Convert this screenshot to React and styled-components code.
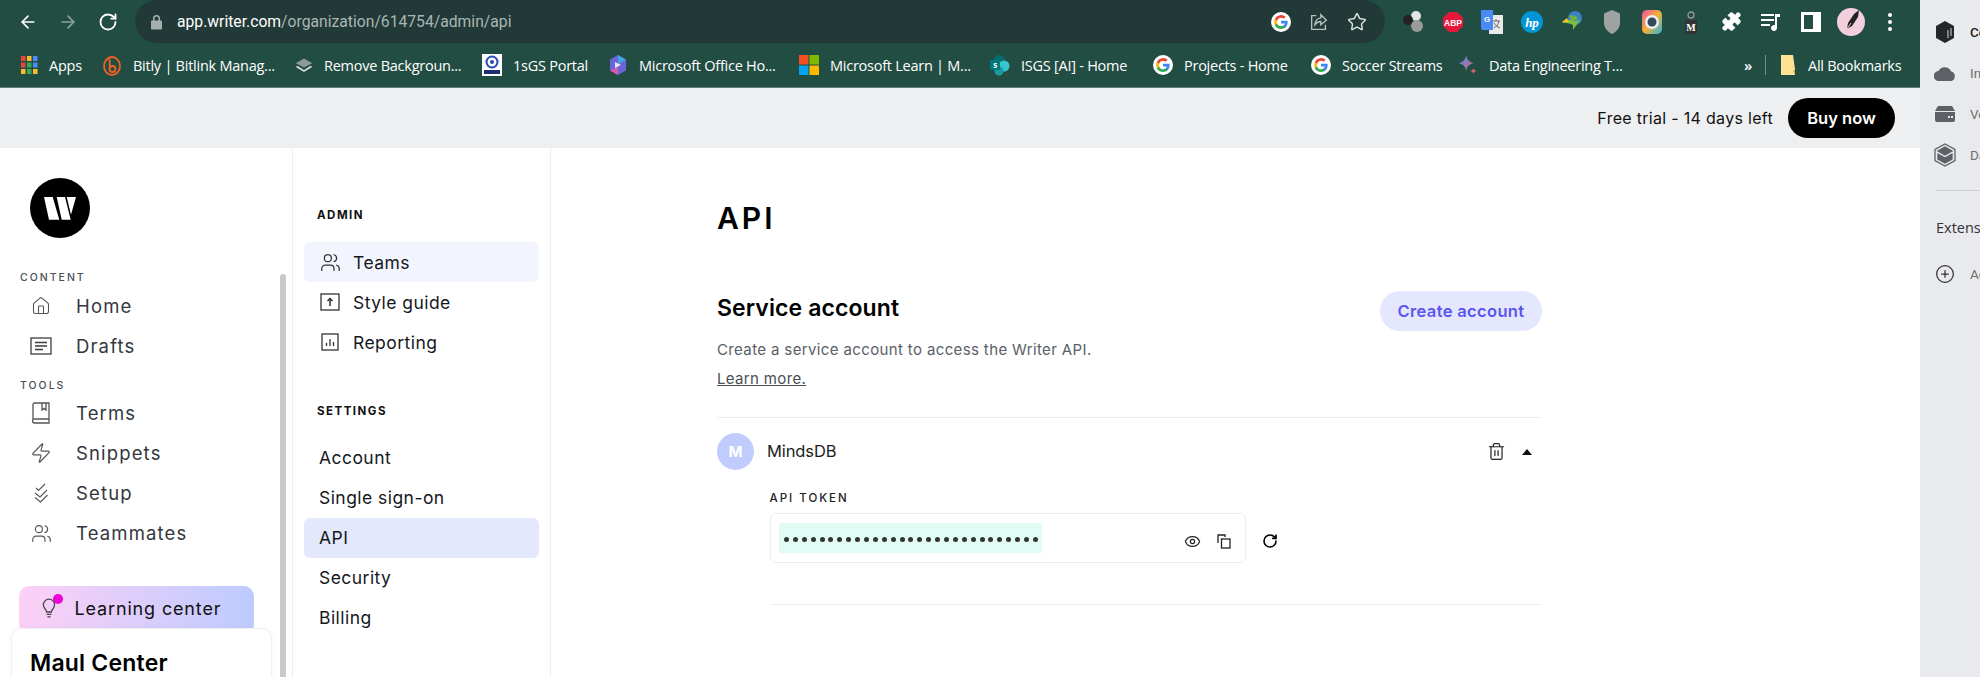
import React from "react";
import styled, { createGlobalStyle } from "styled-components";
import { ArrowLeft, ArrowRight, RotateCw, Star, Puzzle, Eye, Trash2, Home as HomeIcon, Zap, Users, CirclePlus } from "lucide-react";

const Global = createGlobalStyle`
  html, body { margin: 0; padding: 0; background: #fff; }
  body { width: 1980px; height: 677px; overflow: hidden; font-family: "Inter", "Liberation Sans", sans-serif; }
  * { box-sizing: border-box; }
`;
const Shell = styled.div`display: flex; width: 1980px; height: 677px; overflow: hidden;`;
const Window = styled.div`width: 1920px; display: flex; flex-direction: column; flex: none;`;
const Toolbar = styled.div`height: 43px; background: #224d43; display: flex; align-items: center; padding-left: 17px; position: relative;`;
const NavButton = styled.div`width: 40px; height: 43px; display: flex; align-items: center; justify-content: flex-start; padding-left: 1px; color: ${p => p.$dim ? "#8aa39c" : "#fff"};`;
const Omnibox = styled.div`width: 1250px; height: 43px; margin-left: -2px; border-radius: 22px; background: #223a37; display: flex; align-items: center; padding-left: 15px; padding-right: 9px;`;
const Url = styled.div`font: 400 15.7px "Roboto", sans-serif; color: #a9b6b3; margin-left: 14px; flex: 1;`;
const UrlHost = styled.span`color: #fff;`;
const OmniIcon = styled.div`width: 38px; display: flex; justify-content: center; align-items: center; color: #dfe6e4;`;
const ExtRow = styled.div`display: flex; margin-left: 8px; align-items: center;`;
const Ext = styled.div`width: 39.8px; height: 41px; display: flex; align-items: center; justify-content: center; color: #fff;`;
const BookmarkBar = styled.div`height: 45px; background: #224d43; border-bottom: 1px solid #5d7d75; display: flex; align-items: center; padding-left: 20px; position: relative;`;
const Bookmark = styled.div`width: ${p => p.$w}px; flex: none; display: flex; align-items: center; gap: ${p => p.$gap ?? 11}px; font: 400 14.5px "Open Sans", sans-serif; color: #fff; white-space: nowrap; letter-spacing: -.25px;`;
const BmIcon = styled.div`width: ${p => p.$s || 20}px; height: 20px; display: flex; align-items: center; justify-content: center; flex: none;`;
const More = styled.div`font: 600 15px "Open Sans", sans-serif; color: #fff; width: 18px; margin-left: 97px; margin-right: 3px;`;
const Sep = styled.div`width: 1px; height: 20px; background: #6f8e86; margin-right: 14px;`;
const TrialBar = styled.div`height: 60px; background: #eeeff1; display: flex; align-items: center; justify-content: flex-end; padding-right: 25px; gap: 15px;`;
const TrialText = styled.div`font-size: 16px; color: #111; letter-spacing: .3px;`;
const BuyNow = styled.div`width: 107px; height: 40px; border-radius: 20px; background: #000; color: #fff; font-weight: 600; font-size: 16.5px; display: flex; align-items: center; justify-content: center;`;
const Body = styled.div`flex: 1; display: flex; min-height: 0; background: #fff;`;
const Sidebar = styled.div`width: 293px; flex: none; border-right: 1px solid #eceef1; position: relative; overflow: hidden; padding-top: 30px;`;
const Logo = styled.div`width: 60px; height: 60px; border-radius: 50%; background: #000; margin-left: 30px; margin-bottom: 30px; display: flex; align-items: center; justify-content: center;`;
const NavLabel = styled.div`font-size: 10.5px; font-weight: 500; letter-spacing: 2px; color: #4a4f57; height: 18px; line-height: 19px; margin-left: 20px; margin-top: ${p => p.$mt || 0}px; margin-bottom: ${p => p.$mb || 0}px;`;
const NavRow = styled.div`height: ${p => p.$h || 40}px; display: flex; align-items: center; font-size: 18.5px; letter-spacing: 1.15px; color: #33373d; padding-left: 28px;`;
const NavIcon = styled.div`width: 26px; margin-right: 22px; display: flex; justify-content: center; color: #555;`;
const Learning = styled.div`width: 235px; height: 48px; margin: 33px 0 0 19px; border-radius: 10px; background: linear-gradient(90deg, #fdd0f6, #bdcbff); display: flex; align-items: center; padding: 0 0 4px 22px; font-size: 18px; letter-spacing: .85px; color: #111; gap: 17.5px;`;
const BulbWrap = styled.div`position: relative; width: 16px; height: 20px; display: flex; justify-content: center; color: #444;`;
const BulbDot = styled.div`position: absolute; width: 10px; height: 10px; border-radius: 50%; background: #f000d8; top: -4px; right: -6px;`;
const MaulCard = styled.div`position: absolute; left: 11px; top: 480px; width: 261px; height: 80px; border: 1px solid #eef0f3; border-radius: 10px; background: #fff; padding: 20px 18px; font-size: 23px; font-weight: 600; color: #000; letter-spacing: .2px; box-shadow: 0 0 8px rgba(0,0,0,.03);`;
const Scroll = styled.div`position: absolute; left: 280px; top: 126px; bottom: 0; width: 6px; border-radius: 3px 3px 0 0; background: #c9c9c9;`;
const SubNav = styled.div`width: 258px; flex: none; border-right: 1px solid #eceef1; padding: 55px 11px 0 11px;`;
const SubLabel = styled.div`font-size: 11.5px; font-weight: 700; letter-spacing: 1.5px; color: #111; height: 20px; line-height: 25px; margin-left: 13px; margin-top: ${p => p.$mt || 0}px; margin-bottom: ${p => p.$mb || 0}px;`;
const SubRow = styled.div`height: 40px; width: 235px; border-radius: 6px; display: flex; align-items: center; font-size: 17.5px; letter-spacing: .45px; color: #15181d; padding-left: ${p => p.$pl || 15}px; background: ${p => p.$bg || "transparent"};`;
const SubIcon = styled.div`width: 22px; margin-right: 12px; display: flex; justify-content: center; color: #333;`;
const Main = styled.div`flex: 1; padding: 49.5px 0 0 166px;`;
const Content = styled.div`width: 825px;`;
const Title = styled.h1`margin: 0; font-size: 30px; line-height: 40px; font-weight: 600; letter-spacing: 3px; color: #000;`;
const ServiceHead = styled.div`margin-top: 53.5px; height: 40px; display: flex; justify-content: space-between;`;
const Heading = styled.h2`margin: 0; font-size: 23px; line-height: 34.5px; font-weight: 600; color: #000; letter-spacing: .1px;`;
const CreateBtn = styled.div`width: 162px; height: 40px; border-radius: 20px; background: #e4e7fe; color: #5b55ee; font-weight: 600; font-size: 16.5px; letter-spacing: .35px; display: flex; align-items: center; justify-content: center;`;
const Desc = styled.p`margin: 8px 0 0; font-size: 15px; line-height: 22px; color: #5a5e66; letter-spacing: .37px;`;
const LearnMore = styled.a`display: block; margin-top: 7px; font-size: 15px; line-height: 22px; color: #4a4e55; text-decoration: underline; letter-spacing: .35px;`;
const Rule = styled.div`height: 1px; background: #eceef1; margin-top: ${p => p.$mt}px; margin-left: ${p => p.$ml || 0}px;`;
const AccountRow = styled.div`margin-top: 15px; height: 37px; display: flex; align-items: center; color: #222;`;
const Avatar = styled.div`width: 37px; height: 37px; border-radius: 50%; background: #c1ccfe; color: #fff; font-weight: 700; font-size: 15px; display: flex; align-items: center; justify-content: center; margin-right: 13px;`;
const AccountName = styled.div`flex: 1; font-size: 16.5px; color: #1a1d22; letter-spacing: -.1px; padding-bottom: 2px;`;
const Caret = styled.div`width: 0; height: 0; border-left: 5px solid transparent; border-right: 5px solid transparent; border-bottom: 6px solid #111; margin: 0 10px 0 16px;`;
const TokenLabel = styled.div`margin: 20px 0 0 52.5px; font-size: 11.5px; line-height: 16px; font-weight: 500; letter-spacing: 2px; color: #222;`;
const TokenRow = styled.div`margin: 7px 0 0 53px; display: flex; align-items: center; gap: 16px;`;
const TokenField = styled.div`width: 476px; height: 50px; border: 1px solid #eceef1; border-radius: 6px; display: flex; align-items: center; padding-left: 8px; padding-right: 14px;`;
const TokenMask = styled.div`width: 263px; height: 30px; background: #e1fbf5; display: flex; align-items: center; gap: 3.9px; padding: 3px 0 0 5px; margin-right: auto;`;
const Dot = styled.span`width: 5px; height: 5px; border-radius: 50%; background: #333; flex: none;`;
const TokenIcon = styled.div`display: flex; margin-left: 16px; padding-top: 6px; color: #222;`;
const Refresh = styled(RotateCw)`margin-top: 5px;`;
const SidePanel = styled.div`width: 60px; flex: none; background: #e9eaed; padding: 11px 0 0 14px; display: flex; flex-direction: column; overflow: hidden;`;
const SideItem = styled.div`height: 41px; width: 200px; flex: none; display: flex; align-items: center; gap: 14px; font: 400 13.5px "Roboto", sans-serif; color: ${p => p.$dark ? "#1b1d20" : "#6c6f73"}; white-space: nowrap; font-weight: ${p => p.$dark ? 500 : 400}; & > svg { flex: none; }`;
const SideRule = styled.div`height: 1px; width: 100px; flex: none; background: #cfd1d4; margin: 15px 0 26px 2px;`;
const SideText = styled.div`font: 400 14.5px "Open Sans", sans-serif; color: #333; white-space: nowrap; height: 22px; line-height: 22px; margin: 0 0 14px 2px;`;
const PlusSlot = styled.div`width: 22px; display: flex; justify-content: center; color: #333; flex: none;`;

const Google = ({ s = 20 }) => (
  <svg width={s} height={s} viewBox="0 0 24 24">
    <circle cx="12" cy="12" r="12" fill="#fff" />
    <path d="M20 12.2c0-.6 0-1.1-.1-1.6H12v3.1h4.5a3.9 3.9 0 0 1-1.7 2.5v2h2.7c1.6-1.4 2.5-3.5 2.5-6z" fill="#4285F4" />
    <path d="M12 20.3c2.2 0 4.1-.7 5.5-2l-2.7-2c-.7.5-1.7.8-2.8.8-2.2 0-4-1.4-4.6-3.4H4.6v2.1A8.3 8.3 0 0 0 12 20.3z" fill="#34A853" />
    <path d="M7.4 13.7a5 5 0 0 1 0-3.2V8.400H4.600a8.300 8.300 0 0 0 0 7.400z" fill="#FBBC05" />
    <path d="M12 7c1.200 0 2.300.4 3.200 1.200l2.400-2.400A8.300 8.300 0 0 0 4.600 8.400l2.800 2.100C8 8.500 9.800 7 12 7z" fill="#EA4335" />
  </svg>
);
const AppsGrid = () => {
  const c = ["#e8453c", "#f9bb2d", "#4a8af4", "#e8453c", "#3aa757", "#4a8af4", "#f9bb2d", "#3aa757", "#f9bb2d"];
  return <svg width="18" height="20" viewBox="0 0 18 20">{c.map((f, i) => <rect key={i} x={1 + (i % 3) * 6} y={1 + Math.floor(i / 3) * 6.5} width="4.500" height="5" fill={f} />)}</svg>;
};
const BitlyIcon = () => (
  <svg width="20" height="22" viewBox="0 0 20 22" fill="none" stroke="#ee6123" strokeWidth="1.800">
    <ellipse cx="10" cy="12" rx="8" ry="9" /><circle cx="10.500" cy="15" r="3" /><path d="M7.500 4.500l.4 10" />
  </svg>
);
const LayersIcon = () => (
  <svg width="22" height="18" viewBox="0 0 22 18"><path d="M11 1l10 6-10 5L1 7z" fill="#8f9a97" /><path d="M3 10l8 5 8-5 2 1.500-10 6-10-6z" fill="#d5dad8" /></svg>
);
const IsgsIcon = () => (
  <svg width="20" height="22" viewBox="0 0 20 22"><rect width="20" height="22" fill="#fff" /><circle cx="10" cy="8" r="5.500" fill="none" stroke="#2649b5" strokeWidth="2" /><circle cx="10" cy="8" r="2" fill="#2649b5" /><rect x="2" y="16" width="16" height="4" fill="#20306f" /></svg>
);
const OfficeIcon = () => (
  <svg width="20" height="22" viewBox="0 0 20 22"><path d="M10 1l8 4.500v11L10 21l-8-4.500v-11z" fill="#6b64d8" /><path d="M10 1l8 4.500-8 5z" fill="#3fa6e0" /><path d="M2 16.500L10 21V13z" fill="#d65db1" /><path d="M7 8l6 3-6 3z" fill="#e6e6fa" /></svg>
);
const MsIcon = () => (
  <svg width="20" height="20" viewBox="0 0 20 20"><rect width="9.500" height="9.500" fill="#f25022" /><rect x="10.500" width="9.500" height="9.500" fill="#7fba00" /><rect y="10.500" width="9.500" height="9.500" fill="#00a4ef" /><rect x="10.500" y="10.500" width="9.500" height="9.500" fill="#ffb900" /></svg>
);
const SpIcon = () => (
  <svg width="20" height="22" viewBox="0 0 20 22"><circle cx="9" cy="7" r="6" fill="#036c70" /><circle cx="14" cy="12" r="5.500" fill="#37c6d0" /><circle cx="9" cy="17" r="4.500" fill="#1a9ba1" /><rect x="0" y="6" width="10" height="10" rx="1" fill="#03787c" /><text x="5" y="14" fontSize="8" fontWeight="700" fill="#fff" textAnchor="middle" fontFamily="Open Sans">s</text></svg>
);
const GemIcon = () => (
  <svg width="22" height="24" viewBox="0 0 22 24"><defs><linearGradient id="gem" x1="0" y1="0" x2="1" y2="1"><stop offset="0" stopColor="#4a8af4" /><stop offset="1" stopColor="#d96570" /></linearGradient></defs><path d="M9 1c.8 5 2.500 7 8 9-5.500 1.500-7.200 3.500-8 9-.8-5.500-2.500-7.500-8-9 5.500-2 7.200-4 8-9z" fill="url(#gem)" /><path d="M17 15c.3 2 1 2.800 3.500 3.500-2.500.7-3.200 1.500-3.500 3.500-.3-2-1-2.800-3.500-3.500 2.500-.7 3.200-1.500 3.500-3.500z" fill="#d96570" /></svg>
);
const FolderIcon = () => (
  <svg width="16" height="22" viewBox="0 0 16 22"><path d="M1 1h12l2 14v6H1z" fill="#fde293" /><path d="M13 16h2v5z" fill="#c9a94e" /></svg>
);
const ShareIcon = () => (
  <svg width="22" height="22" viewBox="0 0 24 24" fill="none" stroke="#b5c0bd" strokeWidth="1.500"><path d="M9 5H4v15h15v-5" /><path d="M20 10l-6-6v3.500c-4 .5-6 3-6.500 7.500 2-2.500 3.500-3.500 6.500-3.500V15z" /></svg>
);
const Balls = () => (
  <svg width="22" height="24" viewBox="0 0 22 24"><circle cx="14" cy="6" r="5" fill="#e4e4e4" /><circle cx="6" cy="10" r="5" fill="#222" /><circle cx="15" cy="16" r="6" fill="#9a9a9a" /></svg>
);
const Abp = () => (
  <svg width="22" height="22" viewBox="0 0 22 22"><path d="M7 1h8l6 6v8l-6 6H7l-6-6V7z" fill="#e8173a" /><text x="11" y="14.500" fontSize="8.500" fontWeight="700" fill="#fff" textAnchor="middle" fontFamily="Liberation Sans">ABP</text></svg>
);
const Translate = () => (
  <svg width="22" height="24" viewBox="0 0 22 24"><rect x="8" y="5" width="14" height="19" fill="#e9e9e9" /><path d="M12 11h7M15 9v2M18 11c-1 4-3 6-5 7M13 13c1 2 3 4 6 5" stroke="#666" strokeWidth="1" fill="none" /><path d="M0 0h12v20H2a2 2 0 0 1-2-2z" fill="#4a8af4" /><text x="6" y="12" fontSize="8" fontWeight="700" fill="#fff" textAnchor="middle" fontFamily="Liberation Sans">G</text></svg>
);
const Hp = () => (
  <svg width="22" height="22" viewBox="0 0 22 22"><circle cx="11" cy="11" r="11" fill="#0096d6" /><text x="11" y="15.500" fontSize="13" fontStyle="italic" fontWeight="700" fill="#fff" textAnchor="middle" fontFamily="Liberation Serif">hp</text></svg>
);
const Idm = () => (
  <svg width="22" height="24" viewBox="0 0 22 24"><circle cx="14" cy="8" r="7" fill="#3e7fc4" /><path d="M8 6c3-2 8 0 9 3l-6 2z" fill="#6cb33f" /><path d="M1 13c4-4 8-4 12-2l6-1-7 10v-5c-4-2-7-2-11-2z" fill="#7abf43" /><path d="M1 12l5-4 2 4z" fill="#f2c230" /></svg>
);
const Shield = () => (
  <svg width="18" height="24" viewBox="0 0 18 24"><path d="M9 0l8 3.500V13c0 5-4 9-8 11-4-2-8-6-8-11V3.500z" fill="#9ea3a2" /></svg>
);
const Lens = () => (
  <svg width="20" height="24" viewBox="0 0 20 24"><defs><linearGradient id="lens" x1="0" y1="0" x2="1" y2="1"><stop offset="0" stopColor="#f04fa3" /><stop offset=".5" stopColor="#f8b133" /><stop offset="1" stopColor="#20b6e8" /></linearGradient></defs><rect width="20" height="24" rx="5" fill="url(#lens)" /><circle cx="10" cy="12" r="7" fill="#eaf1f2" /><circle cx="10" cy="12" r="4.500" fill="#334b5c" /></svg>
);
const Mext = () => (
  <svg width="16" height="24" viewBox="0 0 16 24"><rect x="2" y="10" width="12" height="14" fill="#333" /><circle cx="8" cy="5" r="3" fill="none" stroke="#999" strokeWidth="1.300" /><text x="8" y="21" fontSize="10" fontWeight="700" fill="#fff" textAnchor="middle" fontFamily="Liberation Serif">M</text></svg>
);
const QueueMusic = () => (
  <svg width="22" height="22" viewBox="0 0 22 22" fill="#fff"><rect x="1" y="3" width="13" height="2" /><rect x="1" y="8" width="13" height="2" /><rect x="1" y="13" width="9" height="2" /><path d="M15 3h5v3h-3v11a3 3 0 1 1-2-2.800z" /></svg>
);
const PanelIcon = () => (
  <svg width="20" height="20" viewBox="0 0 20 20"><rect x="1.500" y="1.500" width="17" height="17" fill="none" stroke="#fff" strokeWidth="3" /><rect x="12" y="2" width="6" height="16" fill="#fff" /></svg>
);
const Profile = () => (
  <svg width="28" height="28" viewBox="0 0 28 28"><circle cx="14" cy="14" r="14" fill="#f2cfdd" /><path d="M22 2l-5 4-6 9-1 6 5-3 6-9z" fill="#222" /><path d="M10 21l4-6" stroke="#f2cfdd" /></svg>
);
const Dots = () => (
  <svg width="6" height="20" viewBox="0 0 6 20" fill="#fff"><circle cx="3" cy="3" r="2" /><circle cx="3" cy="10" r="2" /><circle cx="3" cy="17" r="2" /></svg>
);
const LockIcon = () => (
  <svg width="13" height="16" viewBox="0 0 13 16" fill="#a5b0ad"><path d="M3 7V4.500a3.500 3.500 0 0 1 7 0V7h-1.500V4.500a2 2 0 0 0-4 0V7z" /><rect x="1" y="6.500" width="11" height="9" rx="1" /></svg>
);
const WLogo = () => (
  <svg width="32" height="23" viewBox="0 0 32 23" fill="#fff"><path d="M0 0h8.700l6.600 22.700H5z" /><path d="M12.700 0H21l5.700 22.700h-9z" /><path d="M22.700 0H32l-5 17.700z" /></svg>
);
const DraftsIcon = () => (
  <svg width="22" height="18" viewBox="0 0 22 18" fill="none" stroke="#3d3d3d" strokeWidth="1.300"><rect x="1" y="1" width="20" height="16" /><path d="M5 5.500h12M5 9h12M5 12.500h8" /></svg>
);
const BookIcon = () => (
  <svg width="20" height="22" viewBox="0 0 20 22" fill="none" stroke="#555" strokeWidth="1.300"><path d="M2 18V2.500A1.500 1.500 0 0 1 3.500 1H18v16H3.500a1.700 1.700 0 0 0 0 4H18v-4" /><path d="M11 1v7l2.200-1.600L15 8V1" /></svg>
);
const SetupIcon = () => (
  <svg width="16" height="20" viewBox="0 0 16 20" fill="none" stroke="#555" strokeWidth="1.100"><path d="M3 5l2.500 2.500L12 1M2 10l5 4 7-7M2 14.500l5.500 4.500 7-7" /></svg>
);
const BulbIcon = () => (
  <svg width="16" height="20" viewBox="0 0 20 24" fill="none" stroke="#444" strokeWidth="1.600"><path d="M7 17c0-3-4-4.500-4-9a7 7 0 0 1 14 0c0 4.500-4 6-4 9z" /><path d="M7 20h6M8 23h4" /></svg>
);
const UploadBox = () => (
  <svg width="20" height="18" viewBox="0 0 20 18" fill="none" stroke="#333" strokeWidth="1.300"><rect x="1" y="1" width="18" height="16" /><path d="M10 13V6M7.500 8L10 5.500 12.500 8" strokeWidth="1.500" /></svg>
);
const ChartBox = () => (
  <svg width="18" height="18" viewBox="0 0 18 18" fill="none" stroke="#333" strokeWidth="1.300"><rect x="1" y="1" width="16" height="16" /><path d="M5.500 13v-3M9 13V6M12.500 13V9" /></svg>
);
const CopyIcon = () => (
  <svg width="14" height="15" viewBox="0 0 14 15" fill="none" stroke="#222" strokeWidth="1.300"><rect x="4.500" y="5" width="8.500" height="9" /><path d="M1 9V1h7v2" /></svg>
);
const Cube = () => (
  <svg width="22" height="24" viewBox="0 0 22 24"><path d="M11 1l9 5v12l-9 5-9-5V6z" fill="#24272a" /><path d="M14 10v8M17 8v8" stroke="#9a9da0" strokeWidth="1.500" /></svg>
);
const Cloud = () => (
  <svg width="22" height="16" viewBox="0 0 22 16" fill="#5d6166"><path d="M5 16a5 5 0 0 1-.6-10A7 7 0 0 1 17 6.300 5 5 0 0 1 17 16z" /></svg>
);
const Drive = () => (
  <svg width="22" height="16" viewBox="0 0 22 16" fill="#5d6166"><path d="M4 0h14l3 5H1z" /><path d="M1 6h20v8a2 2 0 0 1-2 2H3a2 2 0 0 1-2-2z" /><rect x="14" y="10" width="2" height="2" fill="#e9eaed" /><rect x="17" y="10" width="2" height="2" fill="#e9eaed" /></svg>
);
const Box3d = () => (
  <svg width="22" height="24" viewBox="0 0 22 24" fill="none" stroke="#5d6166" strokeWidth="1.300"><path d="M11 1l10 5.500v11L11 23 1 17.500v-11z" /><path d="M11 4l7 4-7 4-7-4z" fill="#5d6166" /><path d="M4 11l7 4 7-4v5l-7 4-7-4z" fill="#5d6166" /></svg>
);

const bookmarks = [
  ["Apps", <AppsGrid />, 82, 18],
  ["Bitly | Bitlink Manag...", <BitlyIcon />, 193, 20],
  ["Remove Backgroun...", <LayersIcon />, 187, 18],
  ["1sGS Portal", <IsgsIcon />, 126, 20],
  ["Microsoft Office Ho...", <OfficeIcon />, 191, 20],
  ["Microsoft Learn | M...", <MsIcon />, 191, 20],
  ["ISGS [AI] - Home", <SpIcon />, 163, 20],
  ["Projects - Home", <Google />, 158, 20],
  ["Soccer Streams", <Google />, 147, 20],
  ["Data Engineering T...", <GemIcon />, 189, 20],
];
const extensions = [<Balls />, <Abp />, <Translate />, <Hp />, <Idm />, <Shield />, <Lens />, <Mext />, <Puzzle size={21} fill="#fff" strokeWidth={1} />, <QueueMusic />, <PanelIcon />, <Profile />, <Dots />];

export default function App() {
  return (
    <Shell>
      <Global />
      <Window>
        <Toolbar>
          <NavButton><ArrowLeft size={20} strokeWidth={2} /></NavButton>
          <NavButton $dim><ArrowRight size={20} strokeWidth={2} /></NavButton>
          <NavButton><RotateCw size={20} strokeWidth={2.200} /></NavButton>
          <Omnibox>
            <LockIcon />
            <Url><UrlHost>app.writer.com</UrlHost>/organization/614754/admin/api</Url>
            <OmniIcon><Google s={20} /></OmniIcon>
            <OmniIcon><ShareIcon /></OmniIcon>
            <OmniIcon><Star size={20} strokeWidth={1.700} /></OmniIcon>
          </Omnibox>
          <ExtRow>{extensions.map((e, i) => <Ext key={i}>{e}</Ext>)}</ExtRow>
        </Toolbar>
        <BookmarkBar>
          {bookmarks.map(([t, ic, w, s]) => (
            <Bookmark key={t} $w={w}><BmIcon $s={s}>{ic}</BmIcon>{t}</Bookmark>
          ))}
          <More>»</More>
          <Sep />
          <Bookmark $w={115} $gap={12}><BmIcon $s={16}><FolderIcon /></BmIcon>All Bookmarks</Bookmark>
        </BookmarkBar>
        <TrialBar>
          <TrialText>Free trial - 14 days left</TrialText>
          <BuyNow>Buy now</BuyNow>
        </TrialBar>
        <Body>
          <Sidebar>
            <Logo><WLogo /></Logo>
            <NavLabel>CONTENT</NavLabel>
            <NavRow><NavIcon><HomeIcon size={20} strokeWidth={1.300} /></NavIcon>Home</NavRow>
            <NavRow><NavIcon><DraftsIcon /></NavIcon>Drafts</NavRow>
            <NavLabel $mt={10} $mb={-2}>TOOLS</NavLabel>
            <NavRow $h={41}><NavIcon><BookIcon /></NavIcon>Terms</NavRow>
            <NavRow><NavIcon><Zap size={22} strokeWidth={1.300} /></NavIcon>Snippets</NavRow>
            <NavRow><NavIcon><SetupIcon /></NavIcon>Setup</NavRow>
            <NavRow><NavIcon><Users size={21} strokeWidth={1.300} /></NavIcon>Teammates</NavRow>
            <Learning>
              <BulbWrap><BulbIcon /><BulbDot /></BulbWrap>
              Learning center
            </Learning>
            <MaulCard>Maul Center</MaulCard>
            <Scroll />
          </Sidebar>
          <SubNav>
            <SubLabel $mb={19}>ADMIN</SubLabel>
            <SubRow $bg="#f2f5fe"><SubIcon><Users size={21} strokeWidth={1.400} /></SubIcon>Teams</SubRow>
            <SubRow><SubIcon><UploadBox /></SubIcon>Style guide</SubRow>
            <SubRow><SubIcon><ChartBox /></SubIcon>Reporting</SubRow>
            <SubLabel $mt={36.5} $mb={19}>SETTINGS</SubLabel>
            <SubRow>Account</SubRow>
            <SubRow>Single sign-on</SubRow>
            <SubRow $bg="#e4e8fc">API</SubRow>
            <SubRow>Security</SubRow>
            <SubRow>Billing</SubRow>
          </SubNav>
          <Main>
            <Content>
              <Title>API</Title>
              <ServiceHead>
                <Heading>Service account</Heading>
                <CreateBtn>Create account</CreateBtn>
              </ServiceHead>
              <Desc>Create a service account to access the Writer API.</Desc>
              <LearnMore>Learn more.</LearnMore>
              <Rule $mt={27} />
              <AccountRow>
                <Avatar>M</Avatar>
                <AccountName>MindsDB</AccountName>
                <Trash2 size={19} strokeWidth={1.500} />
                <Caret />
              </AccountRow>
              <TokenLabel>API TOKEN</TokenLabel>
              <TokenRow>
                <TokenField>
                  <TokenMask>{Array.from({ length: 29 }, (_, i) => <Dot key={i} />)}</TokenMask>
                  <TokenIcon><Eye size={17} strokeWidth={1.700} /></TokenIcon>
                  <TokenIcon><CopyIcon /></TokenIcon>
                </TokenField>
                <Refresh size={16} strokeWidth={2.400} />
              </TokenRow>
              <Rule $mt={41} $ml={54} />
            </Content>
          </Main>
        </Body>
      </Window>
      <SidePanel>
        <SideItem $dark><Cube />Connect</SideItem>
        <SideItem><Cloud />Insights</SideItem>
        <SideItem><Drive />Versions</SideItem>
        <SideItem><Box3d />Data</SideItem>
        <SideRule />
        <SideText>Extensions</SideText>
        <SideItem><PlusSlot><CirclePlus size={20} strokeWidth={1.500} /></PlusSlot>Add</SideItem>
      </SidePanel>
    </Shell>
  );
}
